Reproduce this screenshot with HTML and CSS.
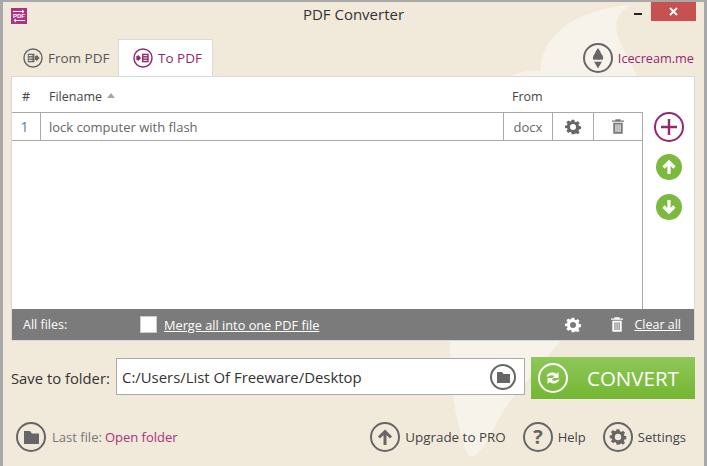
FILE: index.html
```html
<!DOCTYPE html>
<html lang="en">
<head>
<meta charset="utf-8">
<title>PDF Converter</title>
<link rel="stylesheet" href="styles.css">
</head>
<body>
<div class="window">
  <svg class="swoosh" width="701" height="464" viewBox="0 0 701 464">
    <path class="swoosh-fill" d="M508 74C515 70 525 68 538 69C537 52 545 35 568 20C590 8 610 4 628 3C615 10 611 20 614 31C618 45 628 60 634 74Z"/>
    <path class="swoosh-fill" d="M447 338H558C540 360 520 385 508 398C495 415 485 440 478 448C470 457 465 456 461 443C452 415 447 380 447 338Z"/>
  </svg>
  <header class="titlebar">
    <svg class="app-icon" width="16" height="16" viewBox="0 0 16 16">
      <rect width="16" height="16" fill="#b0317f"/>
      <path d="M2 3.500H13M11 2l2 1.500-2 1.500M14 12.500H3M5 11l-2 1.500 2 1.500" fill="none" stroke="#fff"/>
      <text x="8" y="10" class="app-icon-text">PDF</text>
    </svg>
    <div class="title">PDF Converter</div>
    <div class="min"></div>
    <div class="close">
      <svg width="9" height="9" viewBox="0 0 9 9"><path d="M1 1l7 7M8 1L1 8" stroke="#fff" stroke-width="2"/></svg>
    </div>
  </header>
  <nav class="tabs">
    <div class="tab tab-from">
      <svg class="ico" width="20" height="20" viewBox="0 0 21 21"><circle cx="10.500" cy="10.500" r="9.500" class="ring"/><path class="gfill" d="M5 6h7v9H5z"/><path d="M6 8h4M6 10.500h4M6 13h4" stroke="#fff"/><path class="gfill" d="M12.500 8.500h1.500V6.800l3.500 3.700-3.500 3.700v-1.700h-1.500z"/></svg>
      <span>From PDF</span>
    </div>
    <div class="tab tab-active">
      <svg class="ico" width="20" height="20" viewBox="0 0 21 21"><circle cx="10.500" cy="10.500" r="9.500" class="ring-pink"/><path class="pfill" d="M9.500 6h7v9h-7z"/><path d="M11 8h4M11 10.500h4M11 13h4" stroke="#fff"/><path class="pfill" d="M3.500 8.500H5V6.800l3.500 3.700L5 14.200v-1.700H3.500z"/></svg>
      <span>To PDF</span>
    </div>
    <a class="brand">
      <svg class="ico-30" width="30" height="30" viewBox="0 0 30 30"><circle cx="15" cy="15" r="14" class="ring-2"/><path class="gfill" d="M15 5c1.500 2 2.500 3.500 3 5.500 1.500 1.500 2.500 3.500 2 5.500-.3 1-1.500 1-2.500.6-.8.6-1.700.6-2.500 0-.8.6-1.700.6-2.500 0-1 .4-2.200.4-2.500-.6-.5-2 .5-4 2-5.500.5-2 1.500-3.500 3-5.500z"/><path class="gfill" d="M11 18.500c1.500.4 2.800.4 4 0 1.200.4 2.500.4 4 0L15 25.500z"/></svg>
      <span>Icecream.me</span>
    </a>
  </nav>
  <main class="panel">
    <div class="col-head">
      <div class="h-num">#</div>
      <div class="h-name">Filename<i class="sort"></i></div>
      <div class="h-from">From</div>
    </div>
    <div class="body">
      <div class="list">
        <div class="row">
          <div class="c-num">1</div>
          <div class="c-name">lock computer with flash</div>
          <div class="c-from">docx</div>
          <div class="c-act">
            <svg width="16" height="16" viewBox="0 0 24 24"><use href="#gear" class="gear-dark"/></svg>
          </div>
          <div class="c-del">
            <svg width="12" height="17" viewBox="0 0 14 17"><use href="#trash" class="trash-dark"/></svg>
          </div>
        </div>
      </div>
      <aside class="side">
        <svg width="30" height="30" viewBox="0 0 30 30"><circle cx="15" cy="15" r="14" fill="none" stroke="#94286f" stroke-width="2"/><path d="M7 15h16M15 7v16" stroke="#94286f" stroke-width="2.400"/></svg>
        <svg class="round-up" width="26" height="26" viewBox="0 0 26 26"><circle cx="13" cy="13" r="13" fill="#7cb93f"/><path d="M13 20V8M7.500 13.500L13 8l5.500 5.500" fill="none" stroke="#fff" stroke-width="3.200"/></svg>
        <svg class="round-down" width="26" height="26" viewBox="0 0 26 26"><circle cx="13" cy="13" r="13" fill="#7cb93f"/><path d="M13 6v12M7.500 12.500L13 18l5.500-5.500" fill="none" stroke="#fff" stroke-width="3.200"/></svg>
      </aside>
    </div>
    <div class="allbar">
      <span class="all-label">All files:</span>
      <span class="check"></span>
      <a class="merge">Merge all into one PDF file</a>
      <svg class="all-gear" width="16" height="16" viewBox="0 0 24 24"><use href="#gear" class="gear-light"/></svg>
      <svg class="all-trash" width="12" height="17" viewBox="0 0 14 17"><use href="#trash" class="trash-light"/></svg>
      <a class="clear">Clear all</a>
    </div>
  </main>
  <section class="save">
    <label class="save-label">Save to folder:</label>
    <div class="path">
      <span class="path-text">C:/Users/List Of Freeware/Desktop</span>
      <svg width="26" height="26" viewBox="0 0 26 26"><circle cx="13" cy="13" r="12" class="ring-2"/><path class="gfill" d="M7 8h5l1.500 2H20v9H7z"/></svg>
    </div>
    <button class="convert">
      <svg width="30" height="30" viewBox="0 0 30 30"><circle cx="15" cy="15" r="14" fill="none" stroke="#fff" stroke-width="2"/><path d="M8.500 13.500c1-3.500 6-5.500 10-2.500l2-2v6h-6l2-2c-2.500-1.500-5-.5-6 .5zM21.500 16.500c-1 3.500-6 5.500-10 2.500l-2 2v-6h6l-2 2c2.500 1.500 5 .5 6-.5z" fill="#fff"/></svg>
      <span>CONVERT</span>
    </button>
  </section>
  <footer class="foot">
    <svg width="30" height="30" viewBox="0 0 30 30"><circle cx="15" cy="15" r="14" class="ring-2"/><path class="gfill" d="M8 9h6l2 2.500h7V22H8z"/></svg>
    <span class="last">Last file:</span>
    <a class="open">Open folder</a>
    <div class="foot-right">
      <div class="fitem fitem-up">
        <svg width="30" height="30" viewBox="0 0 30 30"><circle cx="15" cy="15" r="14" class="ring-2"/><path d="M15 23V10M9 15.500L15 9.500l6 6" fill="none" stroke="#666" stroke-width="3"/></svg>
        <span>Upgrade to PRO</span>
      </div>
      <div class="fitem">
        <svg width="30" height="30" viewBox="0 0 30 30"><circle cx="15" cy="15" r="14" class="ring-2"/><text x="15" y="22" class="q">?</text></svg>
        <span>Help</span>
      </div>
      <div class="fitem">
        <svg width="30" height="30" viewBox="0 0 30 30"><circle cx="15" cy="15" r="14" class="ring-2"/><svg x="6.500" y="6.500" width="17" height="17" viewBox="0 0 24 24"><use href="#gear" class="gear-dark"/></svg></svg>
        <span>Settings</span>
      </div>
    </div>
  </footer>
</div>
<svg class="defs" width="0" height="0">
  <defs>
    <path id="gear" fill-rule="evenodd" d="M10 1h4l.6 3a8 8 0 0 1 2 .8l2.500-1.700 2.800 2.800-1.700 2.500a8 8 0 0 1 .8 2l3 .6v4l-3 .6a8 8 0 0 1-.8 2l1.700 2.500-2.800 2.800-2.500-1.700a8 8 0 0 1-2 .8L14 23h-4l-.6-3a8 8 0 0 1-2-.8l-2.500 1.700-2.800-2.800 1.700-2.500a8 8 0 0 1-.8-2L0 14v-4l3-.6a8 8 0 0 1 .8-2L2.100 4.900l2.800-2.800 2.500 1.700a8 8 0 0 1 2-.8zM12 7.500a4.500 4.500 0 1 0 0 9 4.500 4.500 0 0 0 0-9z"/>
    <path id="trash" fill-rule="evenodd" d="M4 0h6v1.500h4V3H0V1.500h4zM1.500 4h11v13h-11zM4 6v9h1.300V6zM6.400 6v9h1.300V6zM8.800 6v9h1.300V6z"/>
  </defs>
</svg>
</body>
</html>
```
FILE: styles.css
```css
* { box-sizing: border-box; }
html, body { margin: 0; height: 100%; }
body { background: #a8a8a8; overflow: hidden; padding: 2px 3px 0 3px; font-family: "Open Sans", "Noto Sans", sans-serif; font-size: 13px; color: #444; }
.window { position: relative; width: 701px; height: 464px; background: #f1eadb; display: flex; flex-direction: column; }
.swoosh { position: absolute; left: 0; top: 0; }
.swoosh-fill { fill: #f7f3ea; }
.defs { position: absolute; }
.titlebar, .tabs, .panel, .save, .foot { position: relative; }
.titlebar { height: 37px; flex: none; display: flex; align-items: flex-start; }
.app-icon { margin: 6px 0 0 8px; }
.app-icon-text { font: bold 6px "Liberation Sans", sans-serif; fill: #fff; text-anchor: middle; }
.title { position: absolute; left: 0; right: 0; top: 2px; text-align: center; font-size: 15px; color: #333; }
.min { position: absolute; left: 631px; top: 11px; width: 8px; height: 2px; background: #222; }
.close { position: absolute; left: 648px; top: 0; width: 45px; height: 19px; background: #c75050; display: flex; align-items: center; justify-content: center; }
.tabs { height: 37px; flex: none; display: flex; align-items: flex-end; padding-left: 20px; }
.tab { height: 37px; display: flex; align-items: center; gap: 5px; color: #555; }
.tab-from { width: 95px; }
.tab-active { width: 95px; padding-left: 14px; background: #fff; border: 1px solid #d9d9d6; border-bottom: 0; color: #94286f; }
.tab span { font-size: 13.500px; }
.brand { margin-left: auto; margin-right: 10px; align-self: center; display: flex; align-items: center; gap: 5px; color: #94286f; font-size: 12.700px; }
.ring { fill: none; stroke: #666; stroke-width: 1.500; }
.ring-pink { fill: none; stroke: #94286f; stroke-width: 1.500; }
.ring-2 { fill: none; stroke: #666; stroke-width: 2; }
.gfill { fill: #666; }
.pfill { fill: #94286f; }
.panel { margin: 0 9px 0 8px; height: 265px; flex: none; background: #fff; border: 1px solid #d9d9d6; display: flex; flex-direction: column; }
.col-head { height: 35px; padding-top: 3px; display: flex; align-items: center; color: #444; font-size: 12.500px; flex: none; }
.h-num { width: 28px; padding-left: 10px; }
.h-name { flex: 1; padding-left: 9px; }
.sort { display: inline-block; margin-left: 5px; vertical-align: 3px; border: 4.500px solid transparent; border-bottom: 5px solid #aaa7a0; border-top: 0; }
.h-from { width: 182px; }
.body { flex: 1; display: flex; min-height: 0; }
.list { width: 631px; border-top: 1px solid #a9a9a9; border-right: 1px solid #a9a9a9; }
.row { height: 28px; border-bottom: 1px solid #a9a9a9; display: flex; color: #666; font-size: 13px; }
.row > div { display: flex; align-items: center; }
.c-num { width: 29px; justify-content: center; border-right: 1px solid #a9a9a9; color: #5a7ea0; padding-right: 3px; font-size: 14px; }
.c-name { flex: 1; padding-left: 8px; }
.c-from { width: 49px; justify-content: center; border-left: 1px solid #a9a9a9; }
.c-act { width: 41px; justify-content: center; border-left: 1px solid #a9a9a9; }
.c-del { width: 49px; justify-content: center; border-left: 1px solid #a9a9a9; }
.gear-dark { fill: #666; }
.gear-light { fill: #fff; }
.trash-dark { fill: #777; }
.trash-light { fill: #fff; }
.side { flex: 1; display: flex; flex-direction: column; align-items: center; }
.round-up { margin-top: 12px; }
.round-down { margin-top: 14px; }
.allbar { height: 31px; flex: none; background: #7b7b7b; color: #fff; display: flex; align-items: center; font-size: 12.500px; }
.all-label { margin-left: 11px; width: 117px; }
.check { width: 17px; height: 17px; background: #fff; border: 1px solid #ccc; }
.merge { margin-left: 7px; text-decoration: underline; font-size: 12.750px; }
.all-gear { margin-left: auto; }
.all-trash { margin-left: 30px; }
.clear { margin: 0 13px 0 11px; text-decoration: underline; }
.save { height: 42px; flex: none; margin: 16px 9px 0 8px; display: flex; align-items: center; }
.save-label { width: 105px; color: #333; font-size: 14.800px; white-space: nowrap; }
.path { width: 409px; height: 37px; margin-top: -3px; background: #fff; border: 1px solid #a9a9a9; display: flex; align-items: center; padding: 0 8px 0 5px; margin-right: 6px; }
.path-text { flex: 1; font-size: 14.900px; color: #333; }
.convert { flex: 1; height: 42px; border: 0; padding: 0 0 0 7px; background: linear-gradient(#8ec859, #74b632); display: flex; align-items: center; color: #fff; font: 20.500px "Open Sans", sans-serif; }
.convert span { margin-left: 19px; }
.foot { height: 43px; flex: none; margin: 16px 18px 0 13px; display: flex; align-items: center; }
.last { margin-left: 6px; color: #777; }
.open { margin-left: 3px; color: #a9307f; }
.foot-right { margin-left: auto; display: flex; gap: 17px; }
.fitem { display: flex; align-items: center; gap: 5px; color: #444; }
.fitem-up span { font-size: 13.400px; }
.q { font: bold 20px "Open Sans", sans-serif; fill: #666; text-anchor: middle; }
```
